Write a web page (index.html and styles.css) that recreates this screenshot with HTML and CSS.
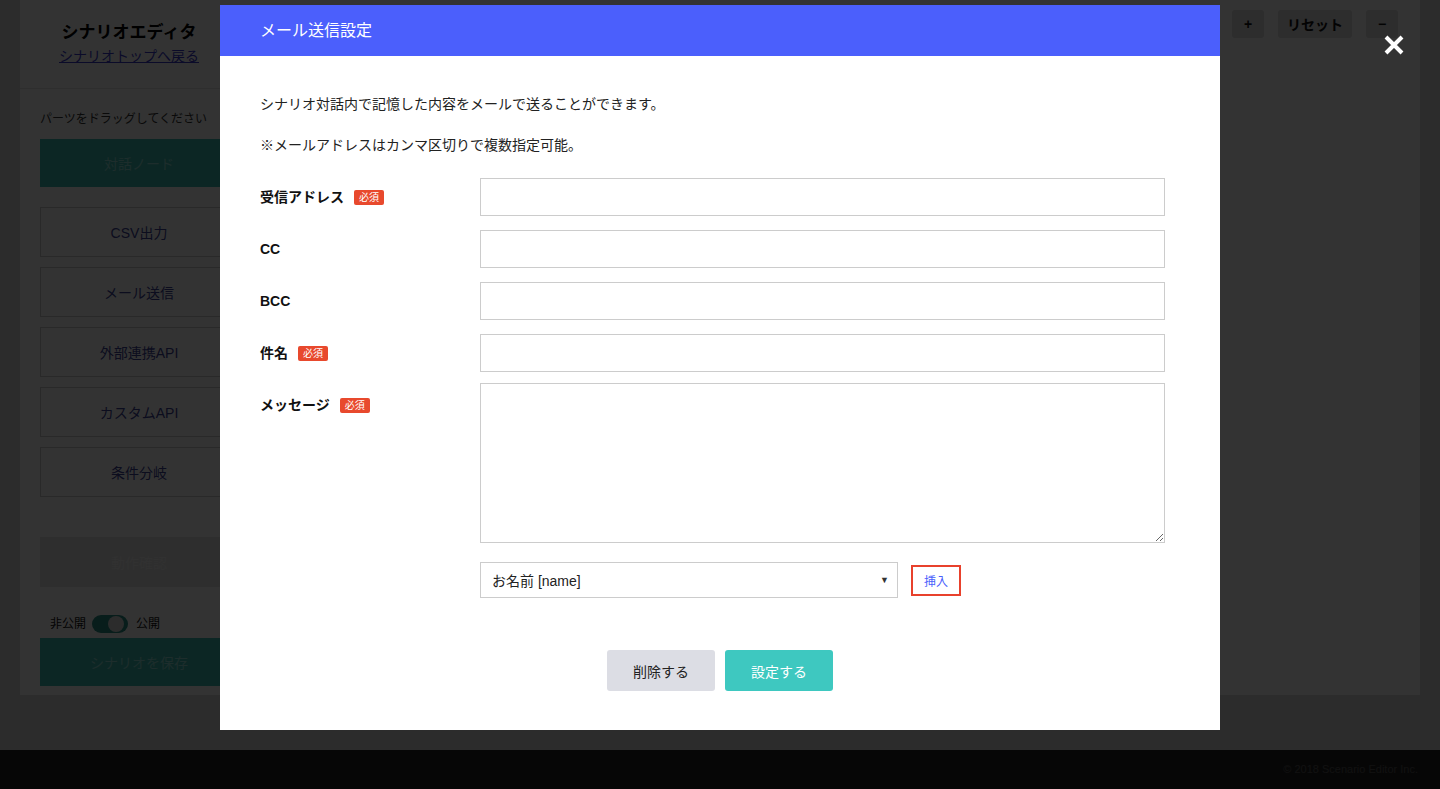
FILE: index.html
```html
<!DOCTYPE html>
<html>
<head>
	<meta charset="utf-8">
	<meta name="viewport" content="width=device-width, initial-scale=1">
	<title>シナリオエディタ</title>

	<link rel="stylesheet" href="styles.css">
</head>
<body>

	<div class="page">
		<div class="editor">
			<div class="sidebar">
				<div class="sidebar-head">
					<h1>シナリオエディタ</h1>
					<a href="#">シナリオトップへ戻る</a>
				</div>
				<div class="sidebar-body">
					<p class="hint">パーツをドラッグしてください</p>
					<div class="part part-main">対話ノード</div>
					<div class="part">CSV出力</div>
					<div class="part">メール送信</div>
					<div class="part">外部連携API</div>
					<div class="part">カスタムAPI</div>
					<div class="part">条件分岐</div>
					<div class="part part-gray">動作確認</div>
					<div class="toggle-row">
						<span>非公開</span>
						<span class="toggle"><span class="knob"></span></span>
						<span>公開</span>
					</div>
					<div class="part part-main part-save">シナリオを保存</div>
				</div>
			</div>
			<div class="canvas">
				<div class="toolbar">
					<button class="tool">+</button>
					<button class="tool tool-wide">リセット</button>
					<button class="tool">−</button>
				</div>
			</div>
		</div>
	</div>
	<footer class="footer">© 2018 Scenario Editor Inc.</footer>


	<div class="overlay">
		<div class="close">
			<svg width="20" height="20" viewBox="0 0 20 20"><path d="M2 2 L18 18 M18 2 L2 18" stroke="#fff" stroke-width="4"/></svg>
		</div>
		<div class="modal">
			<div class="modal-head">メール送信設定</div>
			<div class="modal-body">
				<p class="note">シナリオ対話内で記憶した内容をメールで送ることができます。</p>
				<p class="note">※メールアドレスはカンマ区切りで複数指定可能。</p>

				<div class="form-row">
					<label>受信アドレス<span class="req">必須</span></label>
					<input type="text">
				</div>
				<div class="form-row">
					<label>CC</label>
					<input type="text">
				</div>
				<div class="form-row">
					<label>BCC</label>
					<input type="text">
				</div>
				<div class="form-row form-row-tight">
					<label>件名<span class="req">必須</span></label>
					<input type="text">
				</div>
				<div class="form-row">
					<label class="label-top">メッセージ<span class="req">必須</span></label>
					<textarea></textarea>
				</div>
				<div class="insert-row">
					<div class="select-box">
						<span>お名前 [name]</span>
						<span class="arrow">▼</span>
					</div>
					<button class="insert">挿入</button>
				</div>

				<div class="actions">
					<button class="btn btn-delete">削除する</button>
					<button class="btn btn-save">設定する</button>
				</div>
			</div>
		</div>
	</div>

</body>
</html>
```

FILE: styles.css
```css
*{
	margin: 0;
	padding: 0;
	box-sizing: border-box;
}
body{
	font-family: "Liberation Sans", "Noto Sans CJK JP", sans-serif;
	background: #dcdcdc;
	color: #222;
	height: 789px;
	overflow: hidden;
}
.page{
	height: 750px;
	padding: 0 20px;
}
.editor{
	display: flex;
	height: 695px;
	background: #fff;
}
.sidebar{
	width: 218px;
}
.sidebar-head{
	text-align: center;
	padding: 20px 0 22px;
	border-bottom: 1px solid #e6e6e6;
}
.sidebar-head h1{
	font-size: 17px;
	line-height: 26px;
	font-weight: bold;
	color: #000;
}
.sidebar-head a{
	display: block;
	font-size: 14px;
	line-height: 20px;
	color: #3a3acc;
}
.sidebar-body{
	padding: 21px 0 0 20px;
}
.hint{
	font-size: 12px;
	line-height: 18px;
	margin-bottom: 11px;
	color: #333;
}
.part{
	height: 50px;
	margin-bottom: 10px;
	border: 1px solid #ccc;
	display: flex;
	align-items: center;
	justify-content: center;
	font-size: 14px;
	color: #3c4296;
}
.part-main{
	height: 48px;
	margin-bottom: 20px;
	border: none;
	background: #3dbdb3;
	color: #8fe0da;
}
.part-gray{
	margin-top: 40px;
	margin-bottom: 28px;
	border: none;
	background: #e4e4e4;
	color: #f4f4f4;
}
.part-save{
	margin: 5px 0 0;
}
.toggle-row{
	display: flex;
	align-items: center;
	font-size: 12px;
	line-height: 18px;
	padding-left: 10px;
	color: #111;
}
.toggle{
	width: 36px;
	height: 18px;
	border-radius: 9px;
	background: #2a8f86;
	margin: 0 8px 0 6px;
	display: flex;
	justify-content: flex-end;
	padding: 1px 4px;
}
.knob{
	width: 16px;
	height: 16px;
	border-radius: 50%;
	background: #ddd;
}
.canvas{
	flex: 1;
}
.toolbar{
	display: flex;
	justify-content: flex-end;
	padding: 10px 22px 0 0;
}
.tool{
	width: 32px;
	height: 28px;
	margin-left: 14px;
	border: none;
	border-radius: 3px;
	background: #dedede;
	font-family: inherit;
	font-size: 14px;
	font-weight: bold;
	color: #111;
}
.tool-wide{
	width: 74px;
}
.footer{
	height: 39px;
	background: #222;
	color: #555;
	font-size: 11px;
	line-height: 39px;
	text-align: right;
	padding-right: 22px;
}

.overlay{
	position: fixed;
	top: 0;
	left: 0;
	right: 0;
	bottom: 0;
	background: rgba(0,0,0,0.8);
	display: flex;
	justify-content: center;
	align-items: flex-start;
	padding-top: 5px;
}
.close{
	position: absolute;
	top: 35px;
	left: 1384px;
	width: 20px;
	height: 20px;
}
.close svg{
	display: block;
}
.modal{
	width: 1000px;
	background: #fff;
}
.modal-head{
	height: 51px;
	line-height: 51px;
	padding-left: 40px;
	background: #4b5ffc;
	color: #fff;
	font-size: 16px;
}
.modal-body{
	padding: 38px 40px 39px;
}
.note{
	font-size: 14px;
	line-height: 20px;
	margin-bottom: 21px;
	color: #222;
}
.note + .note{
	margin-bottom: 23px;
}
.form-row{
	display: flex;
	align-items: flex-start;
	margin-bottom: 14px;
}
.form-row-tight{
	margin-bottom: 11px;
}
.form-row label{
	width: 220px;
	padding-top: 9px;
	font-size: 14px;
	line-height: 20px;
	font-weight: bold;
	color: #111;
	display: flex;
	align-items: center;
}
.form-row label.label-top{
	padding-top: 12px;
}
.req{
	display: inline-block;
	margin-left: 10px;
	padding: 0 5px;
	height: 15px;
	line-height: 15px;
	border-radius: 2px;
	background: #e8492d;
	color: #fff;
	font-size: 10px;
	font-weight: normal;
}
.form-row input{
	width: 685px;
	height: 38px;
	border: 1px solid #ccc;
	padding: 0 10px;
	font-size: 14px;
}
.form-row textarea{
	width: 685px;
	height: 160px;
	border: 1px solid #ccc;
	padding: 8px 10px;
	font-size: 14px;
	font-family: inherit;
}
.insert-row{
	display: flex;
	align-items: center;
	margin: 19px 0 0 220px;
}
.select-box{
	width: 418px;
	height: 36px;
	border: 1px solid #ccc;
	display: flex;
	align-items: center;
	justify-content: space-between;
	padding: 0 8px 0 11px;
	font-size: 14px;
	color: #222;
}
.arrow{
	font-size: 9px;
	color: #333;
}
.insert{
	width: 50px;
	height: 31px;
	margin-left: 13px;
	border: 2px solid #e8412c;
	background: #fff;
	color: #4b5ffc;
	font-family: inherit;
	font-size: 12px;
}
.actions{
	display: flex;
	justify-content: center;
	gap: 10px;
	margin-top: 52px;
}
.btn{
	width: 108px;
	height: 41px;
	border: none;
	border-radius: 3px;
	font-family: inherit;
	font-size: 14px;
}
.btn-delete{
	background: #dcdde4;
	color: #222;
}
.btn-save{
	background: #3ec8c0;
	color: #fff;
}
```
